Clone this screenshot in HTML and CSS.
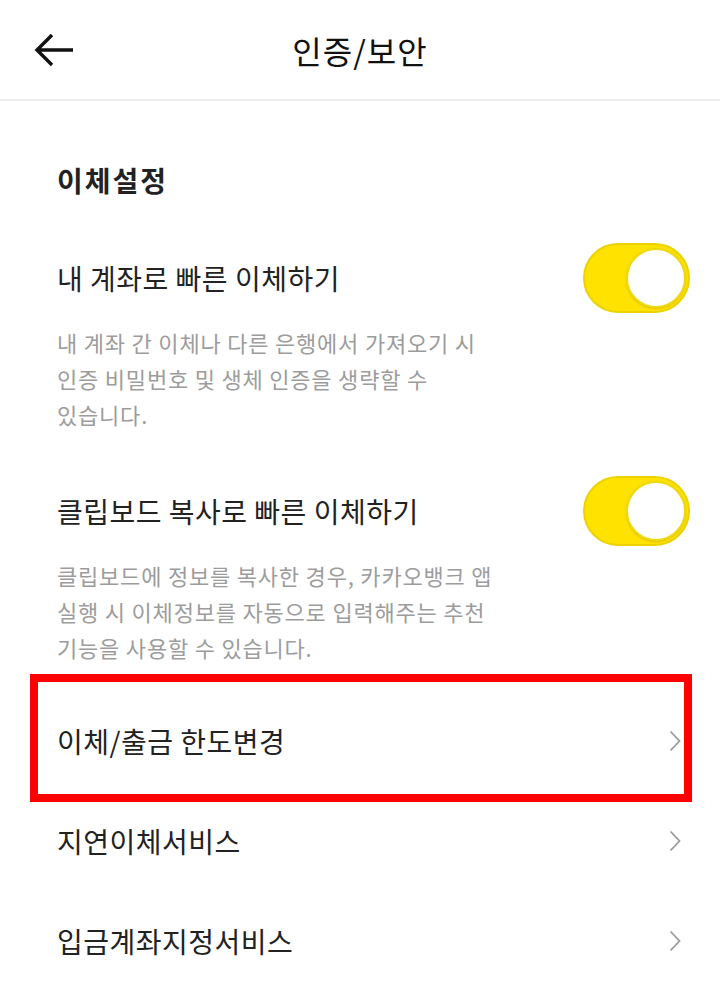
FILE: index.html
```html
<!DOCTYPE html>
<html>
<head>
    <title>인증/보안</title>
    <link rel="stylesheet" href="styles.css">
</head>
<body>
    <div class="topbar">
        <div class="back">
            <svg width="42" height="36" viewBox="0 0 42 36"><path d="M40 18H4M19 3L4 18l15 15" fill="none" stroke="#111" stroke-width="3.4"/></svg>
        </div>
        <div class="title">인증/보안</div>
        <div></div>
    </div>

    <div class="section">
        <h2 class="section-title">이체설정</h2>

        <div class="setting">
            <div class="setting-row">
                <span class="label">내 계좌로 빠른 이체하기</span>
                <span class="toggle on"><span class="knob"></span></span>
            </div>
            <p class="desc">내 계좌 간 이체나 다른 은행에서 가져오기 시 인증 비밀번호 및 생체 인증을 생략할 수 있습니다.</p>
        </div>

        <div class="setting">
            <div class="setting-row">
                <span class="label">클립보드 복사로 빠른 이체하기</span>
                <span class="toggle on"><span class="knob"></span></span>
            </div>
            <p class="desc">클립보드에 정보를 복사한 경우, 카카오뱅크 앱 실행 시 이체정보를 자동으로 입력해주는 추천 기능을 사용할 수 있습니다.</p>
        </div>
    </div>

    <div class="menu">
        <div class="menu-row marked">
            <span class="label">이체/출금 한도변경</span>
            <svg class="chev" width="12" height="22" viewBox="0 0 12 22"><path d="M1.5 1.5L10.5 11 1.5 20.5" fill="none" stroke="#9b9b9b" stroke-width="1.8"/></svg>
            <span class="mark"></span>
        </div>
        <div class="menu-row">
            <span class="label">지연이체서비스</span>
            <svg class="chev" width="12" height="22" viewBox="0 0 12 22"><path d="M1.5 1.5L10.5 11 1.5 20.5" fill="none" stroke="#9b9b9b" stroke-width="1.8"/></svg>
        </div>
        <div class="menu-row">
            <span class="label">입금계좌지정서비스</span>
            <svg class="chev" width="12" height="22" viewBox="0 0 12 22"><path d="M1.5 1.5L10.5 11 1.5 20.5" fill="none" stroke="#9b9b9b" stroke-width="1.8"/></svg>
        </div>
    </div>
</body>
</html>
```

FILE: styles.css
```css
body { margin: 0; background: #fff; color: #222; font-family: "Noto Sans CJK KR", "Noto Sans", sans-serif; overflow: hidden; word-break: keep-all; }
.topbar { height: 99px; border-bottom: 2px solid #eeeeee; display: grid; grid-template-columns: 1fr auto 1fr; align-items: center; }
.back { padding-left: 33px; display: flex; align-items: center; }
.title { font-size: 32px; letter-spacing: 1px; color: #111; }
.section { padding: 61px 30px 0 57px; }
.section-title { margin: 0; font-size: 28px; font-weight: 700; letter-spacing: 2px; line-height: 36px; color: #222; }
.setting { margin-top: 45px; }
.setting + .setting { margin-top: 44px; }
.setting-row { display: flex; align-items: center; justify-content: space-between; height: 70px; }
.label { font-size: 28px; letter-spacing: 0.5px; line-height: 36px; color: #222; }
.desc { margin: 11px 0 0; max-width: 450px; font-size: 22px; letter-spacing: 0.8px; line-height: 36px; color: #9c9c9c; }
.toggle { width: 107px; height: 70px; border-radius: 35px; box-sizing: border-box; border: 2px solid #ecd200; background: #ffe200; display: flex; align-items: center; justify-content: flex-end; padding-right: 2px; }
.knob { width: 60px; height: 60px; border-radius: 50%; box-sizing: border-box; background: #fff; border: 2px solid #efd90f; box-shadow: 0 1px 2px rgba(120, 100, 0, 0.25); }
.menu { margin-top: 26px; }
.menu-row { position: relative; height: 100px; display: flex; align-items: center; justify-content: space-between; padding: 0 39px 0 57px; }
.mark { position: absolute; left: 30px; right: 28px; top: -17px; bottom: -11px; border: 8px solid #ff0000; }
```
